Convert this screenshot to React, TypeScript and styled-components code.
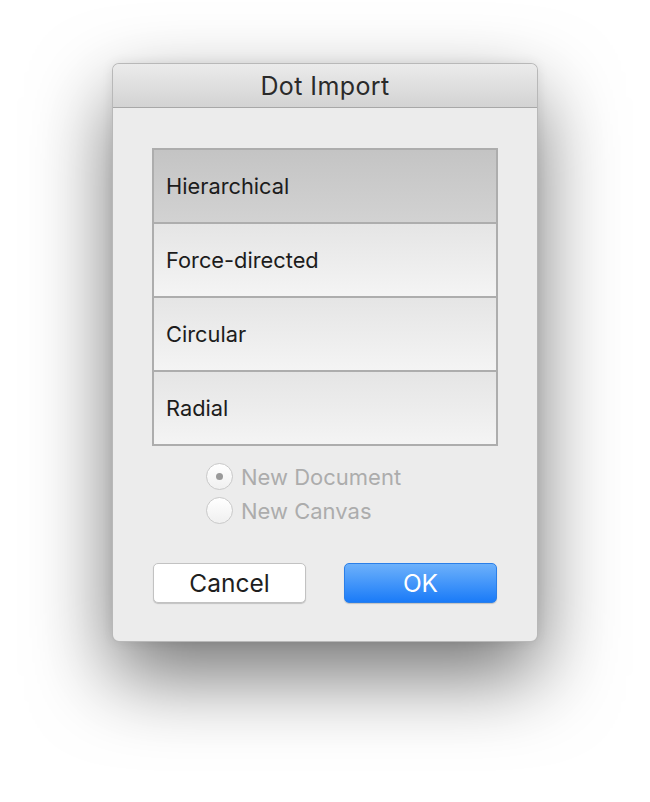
import React, { useState } from "react";
import styled, { createGlobalStyle } from "styled-components";

const Global = createGlobalStyle`
  html, body { margin: 0; padding: 0; background: #ffffff; }
  body { font-family: Inter, "Helvetica Neue", "Liberation Sans", sans-serif; }
`;

const Page = styled.div`
  width: 650px;
  height: 802px;
  padding: 63px 0 0 112px;
  box-sizing: border-box;
  overflow: hidden;
`;

const Window = styled.div`
  width: 426px;
  height: 579px;
  box-sizing: border-box;
  background: #ececec;
  border-radius: 7px;
  border: 1px solid rgba(0, 0, 0, 0.22);
  box-shadow: 0 34px 80px rgba(0, 0, 0, 0.55), 0 0 12px rgba(0, 0, 0, 0.08);
  display: flex;
  flex-direction: column;
  overflow: hidden;
`;

const TitleBar = styled.div`
  height: 42px;
  flex: none;
  display: flex;
  align-items: center;
  justify-content: center;
  background: linear-gradient(#ebebeb, #d3d3d3);
  border-bottom: 1px solid #a8a8a8;
  font-size: 25px;
  letter-spacing: 0.4px;
  color: #2a2a2a;
  padding-top: 1px;
`;

const Body = styled.div`
  display: flex;
  flex-direction: column;
  padding: 40px 39px 0 39px;
`;

const List = styled.div`
  display: flex;
  flex-direction: column;
  border: 2px solid #adadad;
  width: 346px;
  box-sizing: border-box;
`;

const Row = styled.div<{ $selected: boolean }>`
  height: 72px;
  box-sizing: border-box;
  display: flex;
  align-items: center;
  padding-left: 12px;
  font-size: 21.8px;
  color: #1c1c1c;
  background: ${(p) =>
    p.$selected
      ? "linear-gradient(#c4c4c4, #d2d2d2)"
      : "linear-gradient(#e5e5e5, #f4f4f4)"};
  & + & {
    border-top: 2px solid #adadad;
    height: 74px;
  }
`;

const Options = styled.div`
  display: flex;
  flex-direction: column;
  gap: 7px;
  margin: 17px 0 0 54px;
`;

const Option = styled.label`
  display: flex;
  align-items: center;
  gap: 8px;
  font-size: 22px;
  color: #acacac;
  height: 27px;
`;

const RadioCircle = styled.span<{ $checked: boolean }>`
  width: 27px;
  height: 27px;
  box-sizing: border-box;
  border-radius: 50%;
  border: 1px solid #c9c9c9;
  background: linear-gradient(#ffffff, #f0f0f0);
  display: flex;
  align-items: center;
  justify-content: center;
  &::after {
    content: "";
    display: ${(p) => (p.$checked ? "block" : "none")};
    width: 7px;
    height: 7px;
    border-radius: 50%;
    background: #9a9a9a;
  }
`;

const Buttons = styled.div`
  display: flex;
  justify-content: space-between;
  margin: 39px 0 0 1px;
  width: 344px;
`;

const Button = styled.button<{ $primary?: boolean }>`
  width: 153px;
  height: 40px;
  border-radius: 5px;
  font-family: inherit;
  font-size: 24.5px;
  display: flex;
  align-items: center;
  justify-content: center;
  padding: 0;
  cursor: default;
  border: ${(p) => (p.$primary ? "1px solid #2b7fe8" : "1px solid #c2c2c2")};
  background: ${(p) =>
    p.$primary ? "linear-gradient(#6db1fb, #1a7bf8)" : "#ffffff"};
  color: ${(p) => (p.$primary ? "#ffffff" : "#1e1e1e")};
  box-shadow: 0 1px 1px rgba(0, 0, 0, 0.18);
`;

const layouts = ["Hierarchical", "Force-directed", "Circular", "Radial"];

export default function App() {
  const [selected, setSelected] = useState(0);
  const [target, setTarget] = useState(0);
  return (
    <>
      <Global />
      <Page>
        <Window>
          <TitleBar>Dot Import</TitleBar>
          <Body>
            <List>
              {layouts.map((l, i) => (
                <Row key={l} $selected={i === selected} onClick={() => setSelected(i)}>
                  {l}
                </Row>
              ))}
            </List>
            <Options>
              {["New Document", "New Canvas"].map((o, i) => (
                <Option key={o} onClick={() => setTarget(i)}>
                  <RadioCircle $checked={i === target} />
                  {o}
                </Option>
              ))}
            </Options>
            <Buttons>
              <Button>Cancel</Button>
              <Button $primary>OK</Button>
            </Buttons>
          </Body>
        </Window>
      </Page>
    </>
  );
}
